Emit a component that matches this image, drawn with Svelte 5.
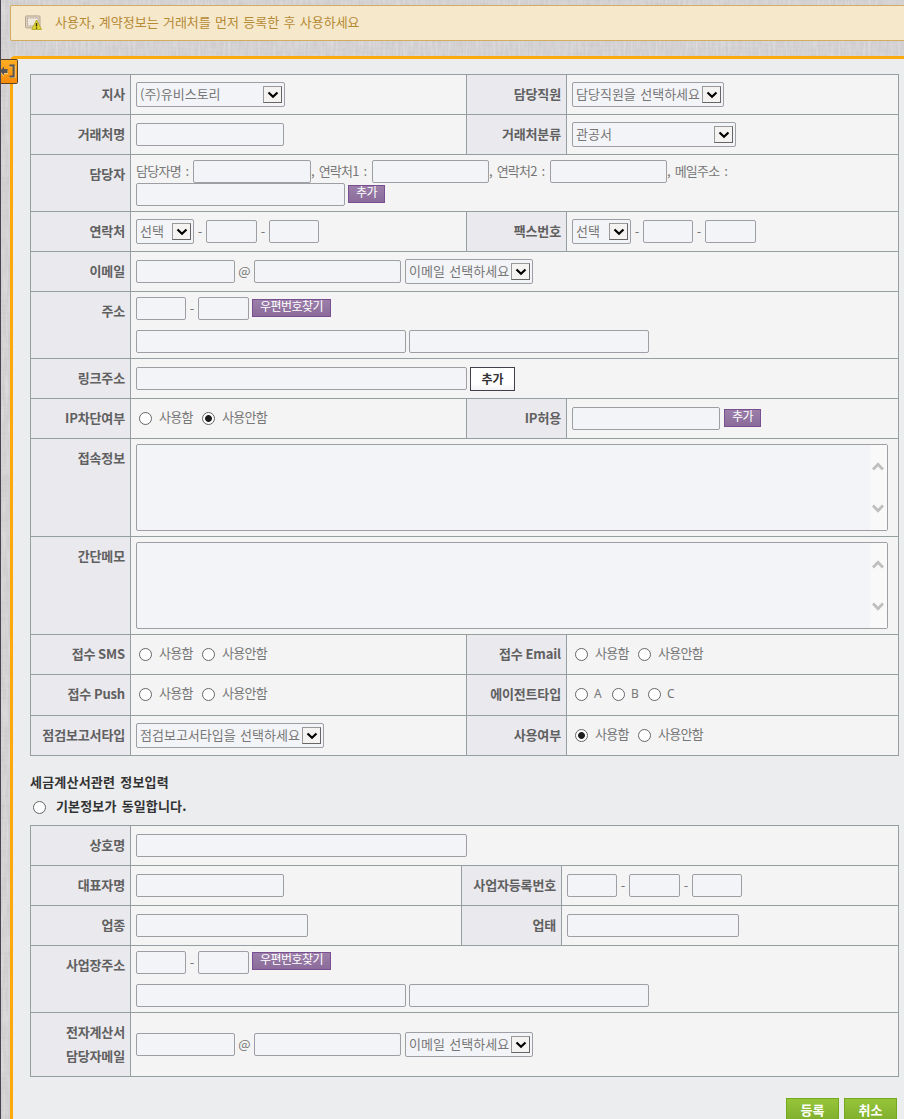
<script>
  const box = (w, ml = 0) => ({ t: 'input', w, ml });
  const sel = (w, text, ml = 0) => ({ t: 'select', w, text, ml });
  const txt = (text, w, ml = 0) => ({ t: 'text', text, w, ml });
  const radio = (text, w, ml = 0, on = false) => ({ t: 'radio', text, w, ml, on });
  const btn = (text, w, ml, dy = 0) => ({ t: 'violet', text, w, ml, dy });
  const dash = () => txt('-', 12);
  const yesNo = (on = -1) => [radio('사용함', 52, 3, on === 0), radio('사용안함', 60, 11, on === 1)];
  const mail = [box(99), txt('@', 19), box(147), sel(128, '이메일 선택하세요', 4)];
  const area = [[{ t: 'area' }]];
  const address = (dy) => [
    [box(50), dash(), box(51), btn('우편번호찾기', 79, 3, dy)],
    [box(270), box(240, 3)]
  ];

  const customer = [
    { h: 40, cells: [
      { label: '지사', lines: [[sel(149, '(주)유비스토리')]] },
      { label: '담당직원', lines: [[sel(152, '담당직원을 선택하세요')]] }
    ] },
    { h: 40, cells: [
      { label: '거래처명', lines: [[box(148)]] },
      { label: '거래처분류', lines: [[sel(164, '관공서')]] }
    ] },
    { h: 57, mode: 'tight', cells: [
      { label: '담당자', lines: [
        [txt('담당자명 :', 57), box(118), txt(', 연락처1 :', 61), box(117), txt(', 연락처2 :', 61), box(117), txt(', 메일주소 :', 66)],
        [box(209), btn('추가', 37, 3, -1)]
      ] }
    ] },
    { h: 40, cells: [
      { label: '연락처', lines: [[sel(58, '선택'), dash(), box(51), dash(), box(50)]] },
      { label: '팩스번호', lines: [[sel(59, '선택'), dash(), box(50), dash(), box(51)]] }
    ] },
    { h: 40, cells: [{ label: '이메일', lines: [mail] }] },
    { h: 67, mode: 'loose', cells: [{ label: '주소', lines: address(-1) }] },
    { h: 40, cells: [{ label: '링크주소', lines: [[box(331), { t: 'white', text: '추가', w: 45, ml: 3 }]] }] },
    { h: 40, cells: [
      { label: 'IP차단여부', lines: [yesNo(1)] },
      { label: 'IP허용', lines: [[box(148), btn('추가', 37, 4, -1)]] }
    ] },
    { h: 98, cells: [{ label: '접속정보', lines: area }] },
    { h: 98, cells: [{ label: '간단메모', lines: area }] },
    { h: 40, cells: [
      { label: '접수 SMS', lines: [yesNo()] },
      { label: '접수 Email', lines: [yesNo()] }
    ] },
    { h: 41, mode: 'odd', cells: [
      { label: '접수 Push', lines: [yesNo()] },
      { label: '에이전트타입', lines: [[radio('A', 27, 3), radio('B', 27, 10), radio('C', 27, 9)]] }
    ] },
    { h: 40, cells: [
      { label: '점검보고서타입', lines: [[sel(188, '점검보고서타입을 선택하세요')]] },
      { label: '사용여부', lines: [yesNo(0)] }
    ] }
  ];

  const invoice = [
    { h: 40, cells: [{ label: '상호명', lines: [[box(331)]] }] },
    { h: 40, cells: [
      { label: '대표자명', lines: [[box(148)]] },
      { label: '사업자등록번호', lines: [[box(50), dash(), box(51), dash(), box(50)]] }
    ] },
    { h: 40, cells: [
      { label: '업종', lines: [[box(172)]] },
      { label: '업태', lines: [[box(172)]] }
    ] },
    { h: 67, mode: 'loose', cells: [{ label: '사업장주소', lines: address(-2) }] },
    { h: 64, cells: [{ label: '전자계산서\n담당자메일', lines: [mail] }] }
  ];
</script>

{#snippet control(c)}
  {#if c.t === 'input'}
    <input class="input" type="text" aria-label="입력" style:width="{c.w}px" style:margin-left="{c.ml}px" />
  {:else if c.t === 'select'}
    <div class="select" style:width="{c.w}px" style:margin-left="{c.ml}px">
      <span>{c.text}</span>
      <i><svg width="12" height="8" viewBox="0 0 12 8"><path d="M1.5 1.5 L6 5.7 L10.5 1.5" fill="none" stroke="#000" stroke-width="2.2" /></svg></i>
    </div>
  {:else if c.t === 'text'}
    <span class="text" class:mid={c.text.length === 1} style:width="{c.w}px">{c.text}</span>
  {:else if c.t === 'radio'}
    <label class="radio" style:width="{c.w}px" style:margin-left="{c.ml}px">
      <b class:on={c.on}></b><span class:latin={c.text.length === 1}>{c.text}</span>
    </label>
  {:else if c.t === 'violet'}
    <button class="violet" style:width="{c.w}px" style:margin-left="{c.ml}px" style:top="{c.dy}px">{c.text}</button>
  {:else if c.t === 'white'}
    <button class="white" style:width="{c.w}px" style:margin-left="{c.ml}px">{c.text}</button>
  {:else}
    <div class="area">
      <div class="scroll">
        <svg width="12" height="9" viewBox="0 0 12 9"><path d="M1 7.5 L6 2.2 L11 7.5" fill="none" stroke="#bfbfbf" stroke-width="2.8" /></svg>
        <svg width="12" height="9" viewBox="0 0 12 9"><path d="M1 1.5 L6 6.8 L11 1.5" fill="none" stroke="#bfbfbf" stroke-width="2.8" /></svg>
      </div>
    </div>
  {/if}
{/snippet}

{#snippet table(rows, first)}
  <div class="table">
    {#each rows as row}
      <div class="row" style:height="{row.h}px">
        {#each row.cells as cell, i}
          <div class="label"><span>{cell.label}</span></div>
          <div class="value {row.mode ?? ''}" style:width={row.cells.length > 1 && i === 0 ? first + 'px' : 'auto'} class:grow={row.cells.length === 1 || i === 1}>
            {#each cell.lines as line}
              <div class="line">
                {#each line as c}{@render control(c)}{/each}
              </div>
            {/each}
          </div>
        {/each}
      </div>
    {/each}
  </div>
{/snippet}

<div class="page">
  <svg class="linen" width="904" height="1119" aria-hidden="true">
    <filter id="weft" x="0" y="0" width="100%" height="100%">
      <feTurbulence type="fractalNoise" baseFrequency="0.04 0.4" numOctaves="2" seed="3" />
      <feColorMatrix values="0 0 0 0 0.5  0 0 0 0 0.49  0 0 0 0 0.49  1.2 0 0 0 -0.45" />
    </filter>
    <filter id="warp" x="0" y="0" width="100%" height="100%">
      <feTurbulence type="fractalNoise" baseFrequency="0.4 0.04" numOctaves="2" seed="8" />
      <feColorMatrix values="0 0 0 0 1  0 0 0 0 1  0 0 0 0 1  1.2 0 0 0 -0.45" />
    </filter>
    <rect width="904" height="1119" filter="url(#weft)" />
    <rect width="904" height="1119" filter="url(#warp)" />
  </svg>

  <div class="notice">
    <svg width="17" height="16" viewBox="0 0 17 16">
      <rect x="0.5" y="0.9" width="14.5" height="12" rx="1" fill="#ddd0bf" stroke="#b8a695" />
      <rect x="2.5" y="3" width="10.5" height="7.8" fill="#efe8dc" stroke="#b3a190" stroke-dasharray="1.5 1" />
      <path d="M11.5 5 L16.5 14.5 H6.8 Z" fill="#e3d62b" stroke="#b5aa2a" stroke-width="0.9" />
      <path d="M11.5 8 V11.5 M11.5 12.4 V13.7" stroke="#3c3505" stroke-width="1.4" />
    </svg>
    <span>사용자, 계약정보는 거래처를 먼저 등록한 후 사용하세요</span>
  </div>

  <div class="panel">
    <div class="tab">
      <svg width="16" height="16" viewBox="0 0 16 16">
        <path d="M0 9 L4 5 V7.7 H8 V11.3 H4 V14 Z" fill="#ffc873" />
        <path d="M0 8 L4 3.5 V6 H7.5 V10 H4 V12.5 Z" fill="#555" />
        <path d="M9.5 3.6 H15 V14.4 H9.5" fill="none" stroke="#ffd08a" stroke-width="1.2" />
        <path d="M9.5 2.6 H13.6 V13.4 H9.5" fill="none" stroke="#555" stroke-width="2" />
      </svg>
    </div>
    {@render table(customer, 336)}
    <h2>세금계산서관련 정보입력</h2>
    <label class="same"><b class="dot"></b><span>기본정보가 동일합니다.</span></label>
    {@render table(invoice, 331)}
    <div class="actions">
      <button>등록</button>
      <button>취소</button>
    </div>
  </div>
</div>

<style>
  :global(body) { margin: 0; overflow: hidden; }
  .page, .page * { box-sizing: border-box; }
  .page {
    position: relative;
    width: 904px;
    height: 1119px;
    overflow: hidden;
    padding: 5px 0 0 9px;
    border-left: 1px solid #484552;
    font: 13px/24px "Noto Sans CJK KR", sans-serif;
    color: #777;
    background: #d2d0d0;
  }
  .linen { position: absolute; left: 0; top: 0; opacity: 0.45; }
  .notice {
    position: relative;
    display: flex;
    align-items: center;
    width: 920px;
    height: 36px;
    padding: 0 0 1px 14px;
    gap: 13px;
    border: 1px solid #d4ab62;
    border-radius: 2px;
    background: #f5e8cb;
    color: #b68a35;
    white-space: nowrap;
  }
  .notice span { margin-top: -2px; word-spacing: 1.4px; }
  .panel {
    position: relative;
    width: 900px;
    height: 1080px;
    margin-top: 15px;
    padding: 15px 0 0 17px;
    border: solid #ffa90a;
    border-width: 3px 0 0 3px;
    border-radius: 5px 0 0 0;
    background: #ebedee;
  }
  .tab {
    position: absolute;
    left: -12px;
    top: 0;
    width: 17px;
    height: 25px;
    padding-top: 3px;
    border: 1px solid #5c4326;
    border-left: 0;
    border-radius: 0 2px 2px 0;
    background: linear-gradient(#ffad24, #f58b0a);
  }
  .tab svg { display: block; margin-left: -1px; }

  .table {
    width: 869px;
    border: solid #969fa0;
    border-width: 1px 0 0 1px;
  }
  .row { display: flex; border-bottom: 1px solid #969fa0; }
  .label {
    flex: none;
    width: 100px;
    padding: 7px 5px 0 0;
    border-right: 1px solid #969fa0;
    background: #eae9ee;
    color: #606060;
    font-weight: 700;
    text-align: right;
    white-space: pre;
    letter-spacing: -0.15px;
  }
  .value {
    display: flex;
    flex-direction: column;
    justify-content: center;
    flex: none;
    padding-left: 5px;
    border-right: 1px solid #969fa0;
    background: #f4f4f4;
  }
  .grow { flex: 1; min-width: 0; }
  .line { display: flex; align-items: center; }
  .tight .line { height: 23px; }
  .loose { gap: 10px; }
  .odd { padding-bottom: 1px; }

  .input {
    flex: none;
    height: 23px;
    margin: 0;
    padding: 0 4px;
    border: 1px solid #9d9fa5;
    border-radius: 2px;
    background: #f3f4f7;
    outline: 0;
  }
  .select {
    display: flex;
    flex: none;
    align-items: center;
    justify-content: space-between;
    height: 25px;
    padding: 0 2px 0 3px;
    border: 1px solid #9d9fa5;
    border-radius: 2px;
    background: #f3f4f7;
    white-space: nowrap;
    word-spacing: 1.5px;
  }
  .select span { width: 0; line-height: 21px; margin-top: -2px; }
  .select i {
    display: grid;
    place-items: center;
    width: 19px;
    height: 17px;
    border: 1px solid #777;
    border-color: #999 #666 #666 #999;
    background: #f4f3f1;
  }
  .text { flex: none; white-space: pre; letter-spacing: -0.75px; word-spacing: 2.6px; line-height: 21px; margin-top: -3px; }
  .text.mid { text-align: center; letter-spacing: 0; margin-top: -3px; }

  .radio { display: flex; flex: none; align-items: center; gap: 7px; white-space: nowrap; }
  .radio span { letter-spacing: -0.7px; line-height: 20px; position: relative; top: -2px; }
  .radio span.latin { font-family: "Noto Sans", sans-serif; font-size: 12px; top: -1px; left: -1px; }
  .radio b, .dot {
    flex: none;
    width: 13px;
    height: 13px;
    border: 1px solid #666;
    border-radius: 50%;
    background: #fff;
  }
  .radio b.on { background: radial-gradient(circle, #1d1d1d 3px, #fff 3.8px); }

  .violet {
    position: relative;
    display: flex;
    flex: none;
    justify-content: center;
    height: 18px;
    padding: 0;
    border: 1px solid #7a4f91;
    background: linear-gradient(#9b7fa9, #8b6b9a);
    color: #fff;
    font: 12px/12px "Noto Sans CJK KR", sans-serif;
    letter-spacing: -0.5px;
  }
  .white {
    flex: none;
    height: 24px;
    padding: 0;
    border: 1px solid #43404d;
    background: linear-gradient(#fff 70%, #f3f3f3);
    color: #333;
    font: 700 12px/22px "Noto Sans CJK KR", sans-serif;
  }

  .area {
    display: flex;
    flex: none;
    justify-content: flex-end;
    width: 752px;
    height: 87px;
    border: 1px solid #9d9fa5;
    border-radius: 2px;
    background: #f3f4f7;
  }
  .scroll {
    display: flex;
    flex-direction: column;
    align-items: center;
    justify-content: space-between;
    width: 17px;
    padding: 17px 1px 17px 0;
    background: #f9f9f9;
  }

  h2 { margin: 14px 0 0; font-size: 13px; line-height: 24px; font-weight: 700; color: #333; letter-spacing: 0.2px; word-spacing: 2px; }
  .same { display: flex; align-items: center; gap: 10px; height: 25px; margin: 0 0 6px 3px; padding-top: 1px; color: #333; font-weight: 700; }
  .same span { position: relative; top: -1px; letter-spacing: 0.15px; word-spacing: 2px; }
  .actions { display: flex; gap: 5px; margin: 21px 0 0 756px; }
  .actions button {
    display: flex;
    justify-content: center;
    width: 53px;
    height: 27px;
    padding: 0;
    border: 1px solid #74a81f;
    background: linear-gradient(#96c53a, #7bab2a);
    color: #fff;
    font: 700 13px/21px "Noto Sans CJK KR", sans-serif;
  }
</style>
